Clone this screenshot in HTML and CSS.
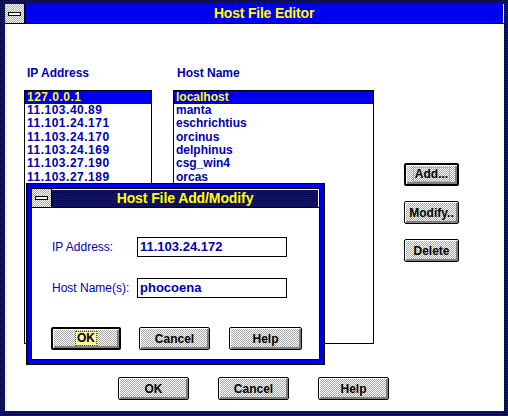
FILE: index.html
```html
<!DOCTYPE html>
<html>
<head>
<meta charset="utf-8">
<title>Host File Editor</title>
<link rel="stylesheet" href="styles.css">
</head>
<body>
<div class="window">
  <div class="titlebar">
    <div class="sysmenu"><span class="sysbar"></span></div>
    <div class="caption main-caption">Host File Editor</div>
  </div>
  <div class="client">
    <div class="labels">
      <div class="label ip-label">IP Address</div>
      <div class="label host-label">Host Name</div>
    </div>
    <div class="lists">
      <ul class="listbox ip-list">
        <li class="selected">127.0.0.1</li>
        <li>11.103.40.89</li>
        <li>11.101.24.171</li>
        <li>11.103.24.170</li>
        <li>11.103.24.169</li>
        <li>11.103.27.190</li>
        <li>11.103.27.189</li>
      </ul>
      <ul class="listbox host-list">
        <li class="selected">localhost</li>
        <li>manta</li>
        <li>eschrichtius</li>
        <li>orcinus</li>
        <li>delphinus</li>
        <li>csg_win4</li>
        <li>orcas</li>
      </ul>
      <div class="side-buttons">
        <div class="btn default"><span class="focus focus-yellow">Add...</span></div>
        <div class="btn">Modify..</div>
        <div class="btn">Delete</div>
      </div>
    </div>
    <div class="bottom-buttons">
      <div class="btn wide">OK</div>
      <div class="btn wide">Cancel</div>
      <div class="btn wide">Help</div>
    </div>
  </div>

  <div class="dialog">
    <div class="dialog-inner">
      <div class="titlebar dlg-titlebar">
        <div class="sysmenu"><span class="sysbar"></span></div>
        <div class="caption dlg-caption">Host File Add/Modify</div>
      </div>
      <div class="dlg-client">
        <div class="form">
          <div class="form-label">IP Address:</div>
          <div class="input">11.103.24.172</div>
          <div class="form-label">Host Name(s):</div>
          <div class="input">phocoena</div>
        </div>
        <div class="dlg-buttons">
          <div class="btn default ok"><span class="focus focus-red">OK</span></div>
          <div class="btn cancel">Cancel</div>
          <div class="btn help">Help</div>
        </div>
      </div>
    </div>
  </div>
</div>
</body>
</html>
```

FILE: styles.css
```css
html, body {
  margin: 0;
  padding: 0;
}

body {
  width: 508px;
  height: 416px;
  overflow: hidden;
  background: #fff;
  font-family: "Liberation Sans", Arial, sans-serif;
}

.window {
  position: relative;
  width: 508px;
  height: 416px;
  box-sizing: border-box;
  padding: 4px 4px 5px 5px;
  background: conic-gradient(at 1px 1px, #0000f0 0 75%, #000050 0) 0 0 / 2px 2px;
  display: flex;
  flex-direction: column;
}

/* ---------- title bars ---------- */
.titlebar {
  display: flex;
  height: 19px;
  border-bottom: 1px solid #000;
  flex: none;
}

.sysmenu {
  width: 19px;
  border-right: 1px solid #000;
  background: repeating-conic-gradient(#ffffff 0 25%, #a8a8a8 0 50%) 0 0 / 2px 2px;
  display: flex;
  align-items: center;
  justify-content: center;
  flex: none;
}

.sysbar {
  display: block;
  width: 11px;
  height: 2px;
  border: 1px solid #000;
  background: #fff;
}

.caption {
  flex: 1;
  background: conic-gradient(at 1px 1px, #0000f0 0 75%, #000050 0) 0 0 / 2px 2px;
  color: #ffff00;
  font-weight: bold;
  font-size: 14px;
  line-height: 19px;
  text-align: center;
  white-space: nowrap;
}

.main-caption {
  border-right: 1px solid #fff;
  letter-spacing: -0.2px;
}

/* ---------- main client ---------- */
.client {
  flex: 1;
  background: #fff;
  padding: 42px 0 0 19px;
}

.labels {
  display: flex;
  height: 14px;
  line-height: 14px;
  font-weight: bold;
  font-size: 12px;
  color: #0000b0;
}

.ip-label {
  width: 149px;
  padding-left: 3px;
  box-sizing: border-box;
}

.host-label {
  padding-left: 4px;
}

.lists {
  display: flex;
  align-items: flex-start;
  margin-top: 10px;
}

.listbox {
  margin: 0;
  padding: 0;
  list-style: none;
  border: 1px solid #000;
  height: 254px;
  box-sizing: border-box;
  background: #fff;
  overflow: hidden;
}

.ip-list {
  width: 128px;
  margin-right: 21px;
}

.ip-list li {
  letter-spacing: 0.5px;
}

.host-list {
  width: 201px;
  margin-right: 30px;
}

.listbox li {
  height: 13.33px;
  line-height: 13px;
  padding-left: 2px;
  font-size: 12px;
  font-weight: bold;
  color: #0000b0;
  white-space: nowrap;
}

.listbox li.selected {
  height: 13px;
  background: conic-gradient(at 1px 1px, #0000f0 0 75%, #000050 0) 0 0 / 2px 2px;
  color: #ffff00;
}

.side-buttons {
  display: flex;
  flex-direction: column;
  gap: 15px;
  padding-top: 73px;
}

/* ---------- buttons ---------- */
.btn {
  box-sizing: border-box;
  width: 55px;
  height: 23px;
  border: 1px solid #000;
  border-radius: 2px;
  background: repeating-conic-gradient(#ffffff 0 25%, #a8a8a8 0 50%) 0 0 / 2px 2px;
  box-shadow: inset 1px 1px 0 #fff, inset -2px -2px 0 #808080;
  display: flex;
  align-items: center;
  justify-content: center;
  font-weight: bold;
  font-size: 12px;
  color: #000;
  white-space: nowrap;
}

.btn.default {
  border-width: 2px;
}

.focus {
  padding: 0 1px;
  line-height: 13px;
}

.focus-yellow {
  border: 1px dotted #d8c800;
}

.focus-red {
  border: 1px dotted #e00000;
  background: #fff8a0;
}

.bottom-buttons {
  display: flex;
  gap: 29px;
  margin-top: 33px;
  padding-left: 94px;
}

.btn.wide {
  width: 71px;
}

/* ---------- dialog ---------- */
.dialog {
  position: absolute;
  left: 26px;
  top: 183px;
  width: 299px;
  height: 182px;
  box-sizing: border-box;
  border: 1px solid #000;
  padding: 4px;
  background: conic-gradient(at 1px 1px, #0000f0 0 75%, #000050 0) 0 0 / 2px 2px;
}

.dialog-inner {
  height: 100%;
  box-sizing: border-box;
  border: 1px solid #000;
  background: #fff;
  display: flex;
  flex-direction: column;
}

.dlg-titlebar {
  height: 18px;
}

.dlg-caption {
  line-height: 17px;
  border-top: 1px solid #fff;
  border-right: 1px solid #fff;
  letter-spacing: -0.1px;
}

.dlg-client {
  flex: 1;
  padding: 29px 0 0 20px;
}

.form {
  display: grid;
  grid-template-columns: 85px 150px;
  row-gap: 21px;
  align-items: center;
}

.form-label {
  font-size: 12px;
  color: #0000b0;
  white-space: nowrap;
}

.input {
  height: 20px;
  box-sizing: border-box;
  border: 1px solid #000;
  padding-left: 2px;
  line-height: 18px;
  font-size: 13px;
  font-weight: bold;
  color: #0000b0;
  white-space: nowrap;
}

.dlg-buttons {
  display: flex;
  margin-top: 29px;
  margin-left: -1px;
}

.btn.ok {
  width: 70px;
}

.btn.cancel {
  width: 71px;
  margin-left: 18px;
}

.btn.help {
  width: 73px;
  margin-left: 19px;
}
```
